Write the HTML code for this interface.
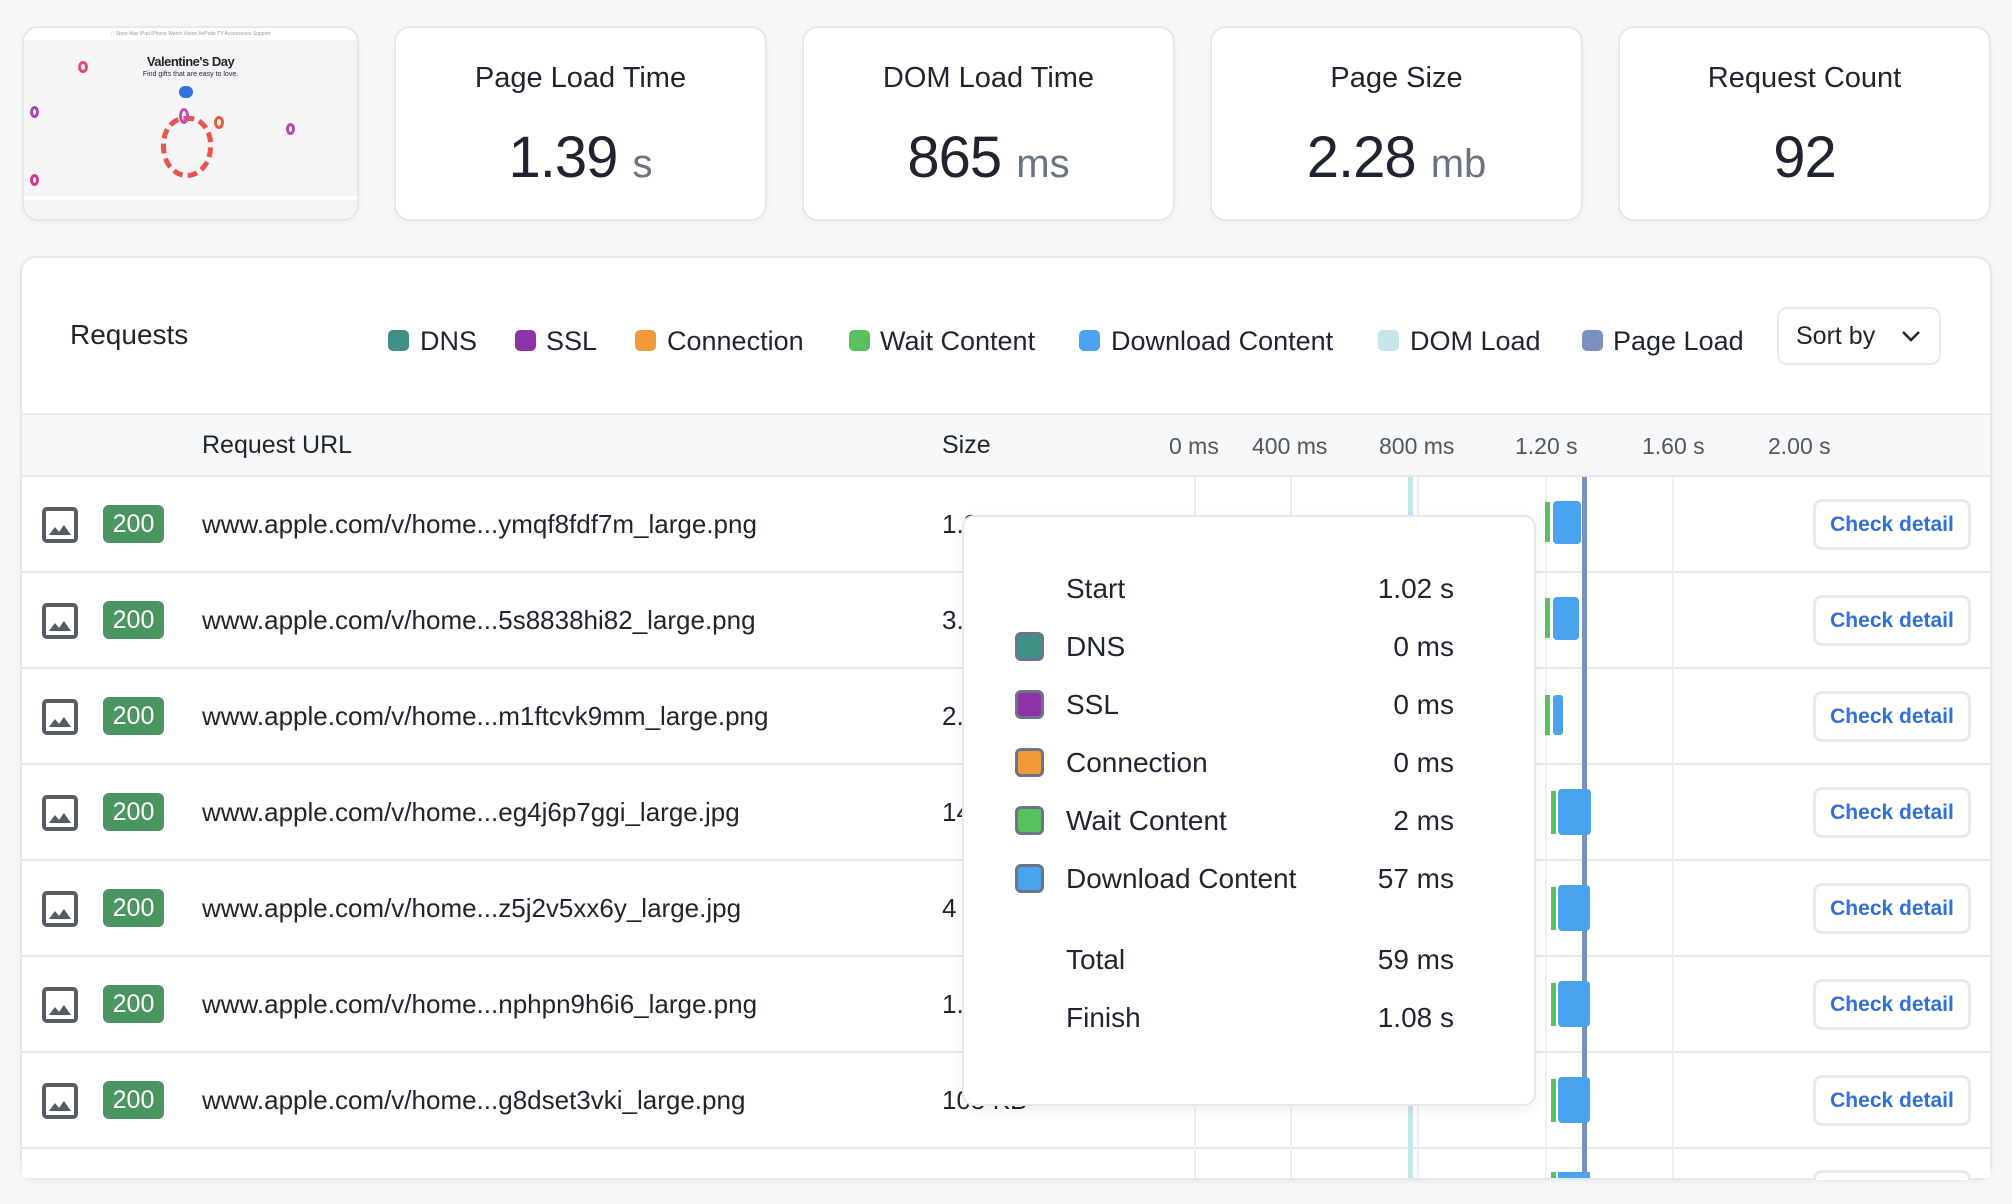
<!DOCTYPE html>
<html><head><meta charset="utf-8"><style>
*{box-sizing:border-box;margin:0;padding:0}
html{overflow:hidden;width:2012px;height:1204px}
body{width:2012px;height:1204px;background:#f6f7f9;font-family:"Liberation Sans",Arial,sans-serif;color:#1f2430;position:relative;overflow:hidden}
.a{position:absolute}
.card{position:absolute;top:26px;height:195px;background:#fff;border:2px solid #e6e7eb;border-radius:16px;box-shadow:0 2px 6px rgba(0,0,0,.04)}
.card .t{position:absolute;top:34px;width:100%;text-align:center;font-size:29px}
.card .v{position:absolute;top:96px;width:100%;text-align:center;font-size:58px;letter-spacing:-1px}
.card .v span{font-size:40px;color:#6b7280;letter-spacing:0}
.sw{position:absolute;width:21px;height:21px;border-radius:5px}
.lg{position:absolute;top:326px;font-size:27px}
.row{position:absolute;left:22px;width:1968px;height:96px;border-bottom:2px solid #e8e9ee;background:#fff}
.ic{position:absolute;width:36px;height:36px}
.bd{position:absolute;left:81px;width:61px;height:38px;background:#4a9660;color:#fff;border-radius:6px;font-size:25px;text-align:center;line-height:38px}
.url{position:absolute;left:181px;font-size:26px;line-height:30px}
.sz{position:absolute;left:920px;font-size:26px;line-height:30px}
.btn{position:absolute;left:1791px;width:158px;height:51px;border:3px solid #e8e9ee;border-radius:9px;color:#2f6fe0;font-size:21px;font-weight:bold;text-align:center;line-height:45px;background:#fff}
.tt{position:absolute;font-size:28px}
.ts{position:absolute;left:1015px;width:29px;height:29px;border-radius:6px;border:3px solid #6b7488}
</style></head><body>

<!-- thumbnail -->
<div class="card" style="left:22px;width:337px;overflow:hidden;background:#f5f5f7">
 <div class="a" style="left:0;top:0;width:100%;height:12px;background:#fff;font-size:5px;color:#999;text-align:center;line-height:12px">&#63743; Store Mac iPad iPhone Watch Vision AirPods TV Accessories Support</div>
 <div class="a" style="left:0;top:26px;width:100%;text-align:center;font-size:13px;font-weight:bold;letter-spacing:-.5px">Valentine's Day</div>
 <div class="a" style="left:0;top:43px;width:100%;text-align:center;font-size:7px">Find gifts that are easy to love.</div>
 <div class="a" style="left:155px;top:58px;width:14px;height:12px;border-radius:7px;background:#2f72e0"></div>
 <div class="a" style="left:137px;top:88px;width:52px;height:62px;border-radius:45% 45% 50% 50%;border:5px dashed #e8544e"></div>
 <div class="a" style="left:155px;top:80px;width:10px;height:16px;border-radius:50%;border:3px solid #c04fb0"></div>
 <div class="a" style="left:54px;top:33px;width:10px;height:12px;border-radius:50%;border:3px solid #e04a6e"></div>
 <div class="a" style="left:190px;top:88px;width:10px;height:13px;border-radius:50%;border:3px solid #ea5a3a"></div>
 <div class="a" style="left:6px;top:146px;width:9px;height:12px;border-radius:50%;border:3px solid #d8368a"></div>
 <div class="a" style="left:262px;top:95px;width:9px;height:12px;border-radius:50%;border:3px solid #b04aa0"></div>
 <div class="a" style="left:6px;top:78px;width:9px;height:12px;border-radius:50%;border:3px solid #a04ab0"></div>
 <div class="a" style="left:0;top:168px;width:100%;height:4px;background:#fff"></div>
</div>

<div class="card" style="left:394px;width:373px"><div class="t">Page Load Time</div><div class="v">1.39 <span>s</span></div></div>
<div class="card" style="left:802px;width:373px"><div class="t">DOM Load Time</div><div class="v">865 <span>ms</span></div></div>
<div class="card" style="left:1210px;width:373px"><div class="t">Page Size</div><div class="v">2.28 <span>mb</span></div></div>
<div class="card" style="left:1618px;width:373px"><div class="t">Request Count</div><div class="v">92</div></div>

<!-- panel -->
<div class="a" style="left:20px;top:256px;width:1972px;height:924px;background:#fff;border:2px solid #e6e7eb;border-radius:16px;overflow:hidden;box-shadow:0 2px 6px rgba(0,0,0,.05)"></div>
<div class="a" style="left:70px;top:319px;font-size:28px">Requests</div>
<div class="sw" style="left:388px;top:330px;background:#3e9184"></div><div class="lg" style="left:420px">DNS</div>
<div class="sw" style="left:515px;top:330px;background:#8e32a8"></div><div class="lg" style="left:546px">SSL</div>
<div class="sw" style="left:635px;top:330px;background:#f09a3a"></div><div class="lg" style="left:667px">Connection</div>
<div class="sw" style="left:849px;top:330px;background:#58c05c"></div><div class="lg" style="left:880px">Wait Content</div>
<div class="sw" style="left:1079px;top:330px;background:#49a3ee"></div><div class="lg" style="left:1111px">Download Content</div>
<div class="sw" style="left:1378px;top:330px;background:#c4e5ec"></div><div class="lg" style="left:1410px">DOM Load</div>
<div class="sw" style="left:1582px;top:330px;background:#7a8fc2"></div><div class="lg" style="left:1613px">Page Load</div>
<div class="a" style="left:1777px;top:307px;width:164px;height:58px;border:2px solid #e6e7eb;border-radius:10px;font-size:25px;line-height:54px;padding-left:17px">Sort by</div>
<svg class="a" style="left:1899px;top:326px" width="24" height="20"><path d="M4 6 L12 14 L20 6" fill="none" stroke="#1f2430" stroke-width="2.5"/></svg>

<div class="a" style="left:22px;top:413px;width:1968px;height:64px;background:#f7f8fa;border-top:2px solid #e8e9ee;border-bottom:2px solid #e8e9ee"></div>
<div class="a" style="left:202px;top:431px;font-size:25px">Request URL</div>
<div class="a" style="left:942px;top:431px;font-size:25px">Size</div>
<div class="a" style="left:1169px;top:433px;font-size:23px;color:#505663">0 ms</div>
<div class="a" style="left:1252px;top:433px;font-size:23px;color:#505663">400 ms</div>
<div class="a" style="left:1379px;top:433px;font-size:23px;color:#505663">800 ms</div>
<div class="a" style="left:1515px;top:433px;font-size:23px;color:#505663">1.20 s</div>
<div class="a" style="left:1642px;top:433px;font-size:23px;color:#505663">1.60 s</div>
<div class="a" style="left:1768px;top:433px;font-size:23px;color:#505663">2.00 s</div>

<div class="row" style="top:477px"></div>
<div class="row" style="top:573px"></div>
<div class="row" style="top:669px"></div>
<div class="row" style="top:765px"></div>
<div class="row" style="top:861px"></div>
<div class="row" style="top:957px"></div>
<div class="row" style="top:1053px"></div>
<div class="row" style="top:1149px;height:29px;border:none"></div>

<!-- grid lines -->
<div class="a" style="left:1194px;top:477px;width:2px;height:701px;background:#eeeff2"></div>
<div class="a" style="left:1290px;top:477px;width:2px;height:701px;background:#eeeff2"></div>
<div class="a" style="left:1417px;top:477px;width:2px;height:701px;background:#eeeff2"></div>
<div class="a" style="left:1545px;top:477px;width:2px;height:701px;background:#eeeff2"></div>
<div class="a" style="left:1672px;top:477px;width:2px;height:701px;background:#eeeff2"></div>
<div class="a" style="left:1408px;top:477px;width:5px;height:701px;background:#c4e5ec"></div>
<div class="a" style="left:1582px;top:477px;width:5px;height:701px;background:#7a8fc2"></div>

<!-- row content -->
<svg width="0" height="0" style="position:absolute"><defs><g id="im"><rect x="2" y="2" width="32" height="32" rx="3" fill="none" stroke="#555b63" stroke-width="4"/><path d="M7 28 L13 20 L17 25 L22 18 L29 28 Z" fill="#555b63"/></g></defs></svg>
<svg class="ic" style="left:42px;top:507px"><use href="#im"/></svg><div class="bd" style="left:103px;top:505px">200</div><div class="url" style="left:202px;top:509px">www.apple.com/v/home...ymqf8fdf7m_large.png</div><div class="sz" style="left:942px;top:509px">1.2 MB</div><div class="btn" style="left:1813px;top:499px">Check detail</div>
<svg class="ic" style="left:42px;top:603px"><use href="#im"/></svg><div class="bd" style="left:103px;top:601px">200</div><div class="url" style="left:202px;top:605px">www.apple.com/v/home...5s8838hi82_large.png</div><div class="sz" style="left:942px;top:605px">3.1 MB</div><div class="btn" style="left:1813px;top:595px">Check detail</div>
<svg class="ic" style="left:42px;top:699px"><use href="#im"/></svg><div class="bd" style="left:103px;top:697px">200</div><div class="url" style="left:202px;top:701px">www.apple.com/v/home...m1ftcvk9mm_large.png</div><div class="sz" style="left:942px;top:701px">2.4 MB</div><div class="btn" style="left:1813px;top:691px">Check detail</div>
<svg class="ic" style="left:42px;top:795px"><use href="#im"/></svg><div class="bd" style="left:103px;top:793px">200</div><div class="url" style="left:202px;top:797px">www.apple.com/v/home...eg4j6p7ggi_large.jpg</div><div class="sz" style="left:942px;top:797px">148 KB</div><div class="btn" style="left:1813px;top:787px">Check detail</div>
<svg class="ic" style="left:42px;top:891px"><use href="#im"/></svg><div class="bd" style="left:103px;top:889px">200</div><div class="url" style="left:202px;top:893px">www.apple.com/v/home...z5j2v5xx6y_large.jpg</div><div class="sz" style="left:942px;top:893px">4 KB</div><div class="btn" style="left:1813px;top:883px">Check detail</div>
<svg class="ic" style="left:42px;top:987px"><use href="#im"/></svg><div class="bd" style="left:103px;top:985px">200</div><div class="url" style="left:202px;top:989px">www.apple.com/v/home...nphpn9h6i6_large.png</div><div class="sz" style="left:942px;top:989px">1.1 MB</div><div class="btn" style="left:1813px;top:979px">Check detail</div>
<svg class="ic" style="left:42px;top:1083px"><use href="#im"/></svg><div class="bd" style="left:103px;top:1081px">200</div><div class="url" style="left:202px;top:1085px">www.apple.com/v/home...g8dset3vki_large.png</div><div class="sz" style="left:942px;top:1085px">105 KB</div><div class="btn" style="left:1813px;top:1075px">Check detail</div>
<div class="btn" style="left:1813px;top:1170px;height:10px;border-bottom:none;border-radius:9px 9px 0 0"></div>

<!-- bars -->
<div class="a" style="left:1545px;top:502px;width:5px;height:40px;background:#58c05c"></div><div class="a" style="left:1553px;top:501px;width:28px;height:43px;background:#49a3ee;border-radius:4px"></div>
<div class="a" style="left:1545px;top:598px;width:5px;height:40px;background:#58c05c"></div><div class="a" style="left:1553px;top:597px;width:26px;height:43px;background:#49a3ee;border-radius:4px"></div>
<div class="a" style="left:1545px;top:695px;width:5px;height:40px;background:#58c05c"></div><div class="a" style="left:1553px;top:695px;width:10px;height:40px;background:#49a3ee;border-radius:3px"></div>
<div class="a" style="left:1551px;top:791px;width:5px;height:43px;background:#58c05c"></div><div class="a" style="left:1558px;top:789px;width:33px;height:46px;background:#49a3ee;border-radius:4px"></div>
<div class="a" style="left:1551px;top:887px;width:5px;height:43px;background:#58c05c"></div><div class="a" style="left:1558px;top:885px;width:32px;height:46px;background:#49a3ee;border-radius:4px"></div>
<div class="a" style="left:1551px;top:983px;width:5px;height:43px;background:#58c05c"></div><div class="a" style="left:1558px;top:981px;width:32px;height:46px;background:#49a3ee;border-radius:4px"></div>
<div class="a" style="left:1551px;top:1079px;width:5px;height:43px;background:#58c05c"></div><div class="a" style="left:1558px;top:1077px;width:32px;height:46px;background:#49a3ee;border-radius:4px"></div>
<div class="a" style="left:1551px;top:1172px;width:5px;height:6px;background:#58c05c"></div><div class="a" style="left:1558px;top:1172px;width:32px;height:6px;background:#49a3ee"></div>

<!-- tooltip -->
<div class="a" style="left:962px;top:515px;width:574px;height:591px;background:#fff;border:2px solid #e6e7eb;border-radius:12px;box-shadow:0 4px 14px rgba(0,0,0,.06)"></div>
<div class="tt" style="left:1066px;top:573px">Start</div><div class="tt" style="left:1300px;width:154px;text-align:right;top:573px">1.02 s</div>
<div class="ts" style="top:632px;background:#3e9184"></div><div class="tt" style="left:1066px;top:631px">DNS</div><div class="tt" style="left:1300px;width:154px;text-align:right;top:631px">0 ms</div>
<div class="ts" style="top:690px;background:#8e32a8"></div><div class="tt" style="left:1066px;top:689px">SSL</div><div class="tt" style="left:1300px;width:154px;text-align:right;top:689px">0 ms</div>
<div class="ts" style="top:748px;background:#f09a3a"></div><div class="tt" style="left:1066px;top:747px">Connection</div><div class="tt" style="left:1300px;width:154px;text-align:right;top:747px">0 ms</div>
<div class="ts" style="top:806px;background:#58c05c"></div><div class="tt" style="left:1066px;top:805px">Wait Content</div><div class="tt" style="left:1300px;width:154px;text-align:right;top:805px">2 ms</div>
<div class="ts" style="top:864px;background:#49a3ee"></div><div class="tt" style="left:1066px;top:863px">Download Content</div><div class="tt" style="left:1300px;width:154px;text-align:right;top:863px">57 ms</div>
<div class="tt" style="left:1066px;top:944px">Total</div><div class="tt" style="left:1300px;width:154px;text-align:right;top:944px">59 ms</div>
<div class="tt" style="left:1066px;top:1002px">Finish</div><div class="tt" style="left:1300px;width:154px;text-align:right;top:1002px">1.08 s</div>

</body></html>
